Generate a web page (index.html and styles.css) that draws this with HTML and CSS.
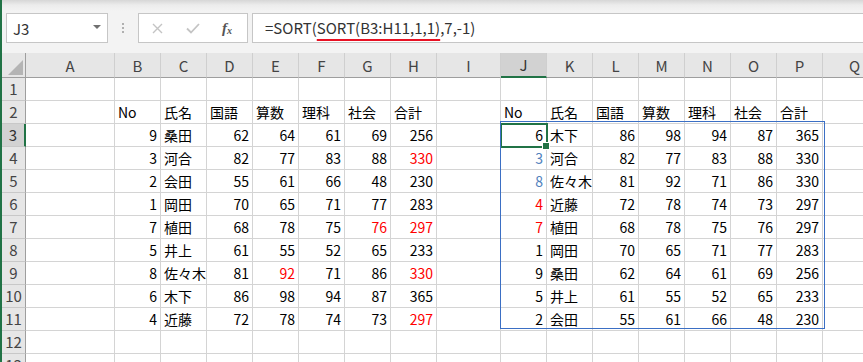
FILE: index.html
```html
<!DOCTYPE html>
<html lang="ja">
  <head>
    <meta charset="UTF-8" />
    <title>SORT</title>
    <link rel="stylesheet" href="styles.css">
  </head>
  <body>
    <div class="app">
      <!-- Formula bar -->
      <div class="formula-area">
        <div class="name-box">
          <span>J3</span>
          <svg class="caret" width="8" height="5" viewBox="0 0 8 5"><polygon points="0,0 8,0 4,4" fill="#707070" /></svg>
        </div>
        <div class="grip">
          <i></i><i></i><i></i>
        </div>
        <div class="func-box">
          <svg width="11" height="11" viewBox="0 0 11 11"><path d="M1 1 L10 10 M10 1 L1 10" stroke="#c4c4c4" stroke-width="1.4" fill="none" /></svg>
          <svg width="14" height="11" viewBox="0 0 14 11"><path d="M1 5.5 L5 9.5 L13 1" stroke="#c4c4c4" stroke-width="1.8" fill="none" /></svg>
          <span class="fx">f<sub>x</sub></span>
        </div>
        <div class="formula">=SORT(<span class="err">SORT(B3:H11,1,1)</span>,7,-1)</div>
      </div>

      <!-- Sheet -->
      <div class="sheet-wrap">
        <table class="sheet">
          <colgroup>
            <col class="c-rh"><col class="c-a">
            <col class="c-n"><col class="c-n"><col class="c-n"><col class="c-n"><col class="c-n"><col class="c-n"><col class="c-n">
            <col class="c-i">
            <col class="c-n"><col class="c-n"><col class="c-n"><col class="c-n"><col class="c-n"><col class="c-n"><col class="c-n">
            <col class="c-i">
          </colgroup>
          <tr class="colhead">
            <th class="corner"><svg width="15" height="15" viewBox="0 0 15 15"><polygon points="15,0 15,15 0,15" fill="#b4b4b4" /></svg></th>
            <th>A</th><th>B</th><th>C</th><th>D</th><th>E</th><th>F</th><th>G</th><th>H</th><th>I</th>
            <th class="sel">J</th><th>K</th><th>L</th><th>M</th><th>N</th><th>O</th><th>P</th><th>Q</th>
          </tr>
          <tr>
            <th>1</th>
            <td></td><td></td><td></td><td></td><td></td><td></td><td></td><td></td><td></td>
            <td></td><td></td><td></td><td></td><td></td><td></td><td></td><td></td>
          </tr>
          <tr>
            <th>2</th>
            <td></td><td>No</td><td>氏名</td><td>国語</td><td>算数</td><td>理科</td><td>社会</td><td>合計</td><td></td>
            <td>No</td><td>氏名</td><td>国語</td><td>算数</td><td>理科</td><td>社会</td><td>合計</td><td></td>
          </tr>
          <tr>
            <th class="sel">3</th>
            <td></td><td class="num">9</td><td>桑田</td><td class="num">62</td><td class="num">64</td><td class="num">61</td><td class="num">69</td><td class="num">256</td><td></td>
            <td class="num active">6</td><td>木下</td><td class="num">86</td><td class="num">98</td><td class="num">94</td><td class="num">87</td><td class="num">365</td><td></td>
          </tr>
          <tr>
            <th>4</th>
            <td></td><td class="num">3</td><td>河合</td><td class="num">82</td><td class="num">77</td><td class="num">83</td><td class="num">88</td><td class="num red">330</td><td></td>
            <td class="num blue">3</td><td>河合</td><td class="num">82</td><td class="num">77</td><td class="num">83</td><td class="num">88</td><td class="num">330</td><td></td>
          </tr>
          <tr>
            <th>5</th>
            <td></td><td class="num">2</td><td>会田</td><td class="num">55</td><td class="num">61</td><td class="num">66</td><td class="num">48</td><td class="num">230</td><td></td>
            <td class="num blue">8</td><td>佐々木</td><td class="num">81</td><td class="num">92</td><td class="num">71</td><td class="num">86</td><td class="num">330</td><td></td>
          </tr>
          <tr>
            <th>6</th>
            <td></td><td class="num">1</td><td>岡田</td><td class="num">70</td><td class="num">65</td><td class="num">71</td><td class="num">77</td><td class="num">283</td><td></td>
            <td class="num red">4</td><td>近藤</td><td class="num">72</td><td class="num">78</td><td class="num">74</td><td class="num">73</td><td class="num">297</td><td></td>
          </tr>
          <tr>
            <th>7</th>
            <td></td><td class="num">7</td><td>植田</td><td class="num">68</td><td class="num">78</td><td class="num">75</td><td class="num red">76</td><td class="num red">297</td><td></td>
            <td class="num red">7</td><td>植田</td><td class="num">68</td><td class="num">78</td><td class="num">75</td><td class="num">76</td><td class="num">297</td><td></td>
          </tr>
          <tr>
            <th>8</th>
            <td></td><td class="num">5</td><td>井上</td><td class="num">61</td><td class="num">55</td><td class="num">52</td><td class="num">65</td><td class="num">233</td><td></td>
            <td class="num">1</td><td>岡田</td><td class="num">70</td><td class="num">65</td><td class="num">71</td><td class="num">77</td><td class="num">283</td><td></td>
          </tr>
          <tr>
            <th>9</th>
            <td></td><td class="num">8</td><td>佐々木</td><td class="num">81</td><td class="num red">92</td><td class="num">71</td><td class="num">86</td><td class="num red">330</td><td></td>
            <td class="num">9</td><td>桑田</td><td class="num">62</td><td class="num">64</td><td class="num">61</td><td class="num">69</td><td class="num">256</td><td></td>
          </tr>
          <tr>
            <th>10</th>
            <td></td><td class="num">6</td><td>木下</td><td class="num">86</td><td class="num">98</td><td class="num">94</td><td class="num">87</td><td class="num">365</td><td></td>
            <td class="num">5</td><td>井上</td><td class="num">61</td><td class="num">55</td><td class="num">52</td><td class="num">65</td><td class="num">233</td><td></td>
          </tr>
          <tr>
            <th>11</th>
            <td></td><td class="num">4</td><td>近藤</td><td class="num">72</td><td class="num">78</td><td class="num">74</td><td class="num">73</td><td class="num red">297</td><td></td>
            <td class="num">2</td><td>会田</td><td class="num">55</td><td class="num">61</td><td class="num">66</td><td class="num">48</td><td class="num">230</td><td></td>
          </tr>
          <tr>
            <th>12</th>
            <td></td><td></td><td></td><td></td><td></td><td></td><td></td><td></td><td></td>
            <td></td><td></td><td></td><td></td><td></td><td></td><td></td><td></td>
          </tr>
          <tr>
            <th>13</th>
            <td></td><td></td><td></td><td></td><td></td><td></td><td></td><td></td><td></td>
            <td></td><td></td><td></td><td></td><td></td><td></td><td></td><td></td>
          </tr>
        </table>
        <!-- spill range J3:P11 -->
        <div class="spill"></div>
      </div>
    </div>
  </body>
</html>
```

FILE: styles.css
```css
/* Reset */
* {
  margin: 0;
  padding: 0;
  box-sizing: border-box;
}

body {
  width: 863px;
  height: 362px;
  overflow: hidden;
  background: #ffffff;
  font-family: "Noto Sans CJK JP", "Noto Sans", sans-serif;
  color: #000;
}

.app {
  border-left: 2px solid #217346;
  height: 362px;
}

/* Formula bar */
.formula-area {
  height: 53px;
  padding: 13px 0 0 4px;
  display: flex;
  align-items: flex-start;
  background: linear-gradient(#d6d6d6 0, #ececec 5px, #f3f3f3 11px, #f3f3f3 100%);
}

.name-box {
  width: 102px;
  height: 30px;
  background: #fff;
  border: 1px solid #c6c6c6;
  display: flex;
  align-items: center;
  justify-content: space-between;
  padding: 0 6px 0 6px;
  font-size: 15px;
  color: #333;
}

.caret {
  margin-top: -2px;
}

.grip {
  width: 30px;
  height: 30px;
  display: flex;
  flex-direction: column;
  align-items: center;
  justify-content: center;
  gap: 2px;
}

.grip i {
  width: 2px;
  height: 2px;
  background: #b0b0b0;
}

.func-box {
  width: 110px;
  height: 30px;
  background: #fff;
  border: 1px solid #c6c6c6;
  display: flex;
  align-items: center;
  padding-left: 13px;
  gap: 23px;
}

.fx {
  font-family: "Liberation Serif", serif;
  font-style: italic;
  font-size: 15px;
  color: #555;
  font-weight: bold;
  margin-left: -1px;
}

.fx sub {
  font-size: 10px;
  vertical-align: -1px;
}

.formula {
  flex: 1;
  height: 30px;
  margin-left: 4px;
  background: #fff;
  border: 1px solid #c6c6c6;
  border-right: none;
  padding-left: 12px;
  font-size: 15px;
  line-height: 27px;
  color: #333;
  white-space: nowrap;
}

.err {
  text-decoration: underline;
  text-decoration-color: #e81123;
  text-decoration-thickness: 1.5px;
  text-underline-offset: 5px;
}

/* Sheet */
.sheet-wrap {
  position: relative;
}

.sheet {
  border-collapse: separate;
  border-spacing: 0;
  table-layout: fixed;
  width: 885px;
  font-size: 14px;
}

.c-rh { width: 24px; }
.c-a { width: 89px; }
.c-n { width: 46px; }
.c-i { width: 64px; }

.sheet tr {
  height: 23px;
}

.sheet tr.colhead {
  height: 23px;
}

.sheet td {
  border-right: 1px solid #d4d4d4;
  border-bottom: 1px solid #d4d4d4;
  padding: 0 2px 0 3px;
  white-space: nowrap;
  overflow: hidden;
  line-height: 22px;
}

.sheet td.num {
  text-align: right;
  padding: 0 3px 0 0;
}

.sheet th {
  background: #e6e6e6;
  font-weight: normal;
  font-size: 15px;
  color: #444;
  border-right: 1px solid #9e9e9e;
  border-bottom: 1px solid #c8c8c8;
  line-height: 22px;
  text-align: center;
}

.colhead th {
  border-right: 1px solid #cfcfcf;
  border-bottom: 1px solid #9e9e9e;
  padding-top: 1px;
}

.colhead th.corner {
  border-right: 1px solid #9e9e9e;
  text-align: right;
  vertical-align: bottom;
  padding: 0 2px 2px 0;
  line-height: 0;
}

.sheet th.sel {
  background: #d2d2d2;
  color: #333;
}

.colhead th.sel {
  border-bottom: 2px solid #217346;
}

.sheet tr th.sel:first-child {
  border-right: 2px solid #217346;
}

.red {
  color: #ff0000;
}

.blue {
  color: #4f81bd;
}

.sheet td.active {
  position: relative;
  outline: 2px solid #217346;
  outline-offset: -1px;
  overflow: visible;
}

.sheet td.active::after {
  content: "";
  position: absolute;
  right: -4px;
  bottom: -4px;
  width: 6px;
  height: 6px;
  background: #217346;
  border: 1px solid #fff;
}

.spill {
  position: absolute;
  left: 498px;
  top: 68px;
  width: 325px;
  height: 208px;
  border: 1px solid #3b6fc4;
  pointer-events: none;
}
```
